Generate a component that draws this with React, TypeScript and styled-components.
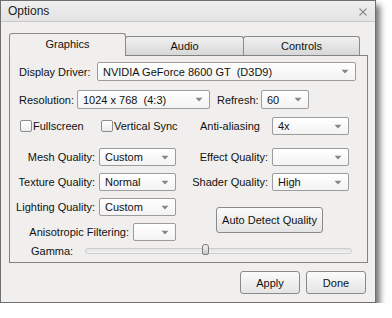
import React from "react";
import styled, { createGlobalStyle } from "styled-components";

const GlobalStyle = createGlobalStyle`
  html, body { margin: 0; padding: 0; background: #ffffff; }
  body { font-family: "Liberation Sans", Arial, sans-serif; font-size: 11px; color: #111; }
`;

const Window = styled.div`
  width: 376px;
  height: 303px;
  box-sizing: border-box;
  border: 1px solid #6f6f6f;
  background: #f0efed;
  box-shadow: 4px 5px 6px rgba(0, 0, 0, 0.55);
  display: flex;
  flex-direction: column;
`;

const TitleBar = styled.div`
  height: 21px;
  flex: none;
  box-sizing: border-box;
  border-bottom: 1px solid #c8c8c8;
  background: linear-gradient(#efefef, #e3e3e3);
  display: flex;
  align-items: center;
  justify-content: space-between;
  padding: 0 8px 0 7px;
  font-size: 12px;
  color: #222;
`;

const CloseBtn = styled.svg`
  width: 8px;
  height: 8px;
  margin-top: 1px;
`;

const Body = styled.div`
  padding: 11px 7px 0 8px;
  display: flex;
  flex-direction: column;
`;

const TabBar = styled.div`
  display: flex;
  align-items: flex-end;
  height: 22px;
`;

const Tab = styled.div<{ $w: number; $active?: boolean }>`
  width: ${(p) => p.$w}px;
  box-sizing: border-box;
  height: ${(p) => (p.$active ? 23 : 19)}px;
  margin-bottom: ${(p) => (p.$active ? -1 : 0)}px;
  margin-left: ${(p) => (p.$active ? 0 : -1)}px;
  position: relative;
  z-index: ${(p) => (p.$active ? 2 : 1)};
  border: 1px solid #8a8a8a;
  border-bottom: none;
  border-radius: 3px 3px 0 0;
  background: ${(p) => (p.$active ? "#f0efed" : "linear-gradient(#f1f1f1, #d7d7d7)")};
  display: flex;
  align-items: center;
  justify-content: center;
  padding-bottom: ${(p) => (p.$active ? 2 : 0)}px;
  color: #111;
  &:first-child { margin-left: 0; }
`;

const Panel = styled.div`
  width: 359px;
  box-sizing: border-box;
  border: 1px solid #828282;
  padding: 6px 11px 4px 9px;
  display: flex;
  flex-direction: column;
`;

const Row = styled.div<{ $h: number; $mt?: number }>`
  display: flex;
  align-items: center;
  height: ${(p) => p.$h}px;
  margin-top: ${(p) => p.$mt ?? 0}px;
`;

const Label = styled.span<{ $w?: number; $ml?: number }>`
  ${(p) => (p.$w ? `width: ${p.$w}px; flex: none;` : "")}
  margin-left: ${(p) => p.$ml ?? 0}px;
  white-space: nowrap;
`;

const SelectBox = styled.div<{ $w?: number; $h?: number }>`
  ${(p) => (p.$w ? `width: ${p.$w}px; flex: none;` : "flex: 1;")}
  height: ${(p) => p.$h ?? 18}px;
  box-sizing: border-box;
  border: 1px solid #9c9c9c;
  border-radius: 2px;
  background: linear-gradient(#ffffff, #f3f3f3);
  display: flex;
  align-items: center;
  justify-content: space-between;
  padding: 0 6px 0 5px;
  white-space: pre;
  color: #111;
`;

const Arrow = () => (
  <svg width="8" height="5" viewBox="0 0 8 5" style={{ flex: "none" }}>
    <path d="M0.5 0.8 L7.5 0.8 L4 4.4 Z" fill="#858585" />
  </svg>
);

const Select = ({ value = "", w, h }: { value?: string; w?: number; h?: number }) => (
  <SelectBox $w={w} $h={h}>
    <span>{value}</span>
    <Arrow />
  </SelectBox>
);

const CheckItem = styled.label<{ $w: number; $ml?: number }>`
  width: ${(p) => p.$w}px;
  margin-left: ${(p) => p.$ml ?? 0}px;
  flex: none;
  display: flex;
  align-items: center;
  gap: 1px;
`;

const Box = styled.span`
  width: 12px;
  height: 12px;
  box-sizing: border-box;
  border: 1px solid #8c8c8c;
  border-radius: 2px;
  background: linear-gradient(#ffffff, #ececec);
`;

const Grid = styled.div`
  display: grid;
  grid-template-columns: 157px 173px;
  margin-top: 12px;
`;

const Column = styled.div`
  display: flex;
  flex-direction: column;
  gap: 5px;
`;

const FieldRow = styled.div`
  height: 20px;
  display: flex;
  align-items: center;
  justify-content: flex-end;
  gap: 4px;
`;

const Button = styled.div<{ $w: number; $h: number }>`
  width: ${(p) => p.$w}px;
  height: ${(p) => p.$h}px;
  box-sizing: border-box;
  border: 1px solid #8a8a8a;
  border-radius: 3px;
  background: linear-gradient(#fbfbfb, #e4e4e4);
  display: flex;
  align-items: center;
  justify-content: center;
  color: #111;
  flex: none;
`;

const AutoButton = styled(Button)`
  align-self: flex-end;
  margin-right: 26px;
  margin-top: 10px;
`;

const GammaRow = styled.div`
  display: flex;
  align-items: center;
  height: 14px;
  margin-top: 2px;
  padding-left: 12px;
`;

const Track = styled.div`
  position: relative;
  width: 267px;
  height: 6px;
  box-sizing: border-box;
  border: 1px solid #cdcdcd;
  border-radius: 3px;
  background: linear-gradient(#e2e2e2, #f3f3f3);
`;

const Thumb = styled.div`
  position: absolute;
  top: -5px;
  width: 7px;
  height: 11px;
  box-sizing: border-box;
  border: 1px solid #7a7a7a;
  border-radius: 3px 3px 2px 2px;
  background: linear-gradient(#f4f4f4, #c9c9c9);
`;

const Footer = styled.div`
  display: flex;
  justify-content: flex-end;
  gap: 6px;
  margin-top: 8px;
  padding-right: 2px;
`;

export default function App() {
  const gamma = 0.45;
  return (
    <>
      <GlobalStyle />
      <Window>
        <TitleBar>
          <span>Options</span>
          <CloseBtn viewBox="0 0 8 8">
            <path d="M0.5 0.5 L7.5 7.5 M7.5 0.5 L0.5 7.5" stroke="#8a8a8a" strokeWidth="1.1" />
          </CloseBtn>
        </TitleBar>
        <Body>
          <TabBar>
            <Tab $w={117} $active>Graphics</Tab>
            <Tab $w={119}>Audio</Tab>
            <Tab $w={117}>Controls</Tab>
          </TabBar>
          <Panel>
            <Row $h={19}>
              <Label $w={78}>Display Driver:</Label>
              <Select value="NVIDIA GeForce 8600 GT  (D3D9)" h={19} />
            </Row>
            <Row $h={19} $mt={9}>
              <Label $w={58}>Resolution:</Label>
              <Select value="1024 x 768  (4:3)" w={133} h={19} />
              <Label $w={44} $ml={7}>Refresh:</Label>
              <Select value="60" w={48} h={19} />
            </Row>
            <Row $h={18} $mt={8}>
              <CheckItem $w={81} $ml={1}>
                <Box />
                <span>Fullscreen</span>
              </CheckItem>
              <CheckItem $w={99}>
                <Box />
                <span>Vertical Sync</span>
              </CheckItem>
              <Label $w={72}>Anti-aliasing</Label>
              <Select value="4x" w={77} />
            </Row>
            <Grid>
              <Column>
                <FieldRow>
                  <Label>Mesh Quality:</Label>
                  <Select value="Custom" w={77} />
                </FieldRow>
                <FieldRow>
                  <Label>Texture Quality:</Label>
                  <Select value="Normal" w={77} />
                </FieldRow>
                <FieldRow>
                  <Label>Lighting Quality:</Label>
                  <Select value="Custom" w={77} />
                </FieldRow>
                <FieldRow>
                  <Label>Anisotropic Filtering:</Label>
                  <Select w={43} />
                </FieldRow>
              </Column>
              <Column>
                <FieldRow>
                  <Label>Effect Quality:</Label>
                  <Select w={77} />
                </FieldRow>
                <FieldRow>
                  <Label>Shader Quality:</Label>
                  <Select value="High" w={77} />
                </FieldRow>
                <AutoButton $w={107} $h={26}>Auto Detect Quality</AutoButton>
              </Column>
            </Grid>
            <GammaRow>
              <Label $w={54}>Gamma:</Label>
              <Track>
                <Thumb style={{ left: `${gamma * (267 - 9)}px` }} />
              </Track>
            </GammaRow>
          </Panel>
          <Footer>
            <Button $w={60} $h={23}>Apply</Button>
            <Button $w={60} $h={23}>Done</Button>
          </Footer>
        </Body>
      </Window>
    </>
  );
}
